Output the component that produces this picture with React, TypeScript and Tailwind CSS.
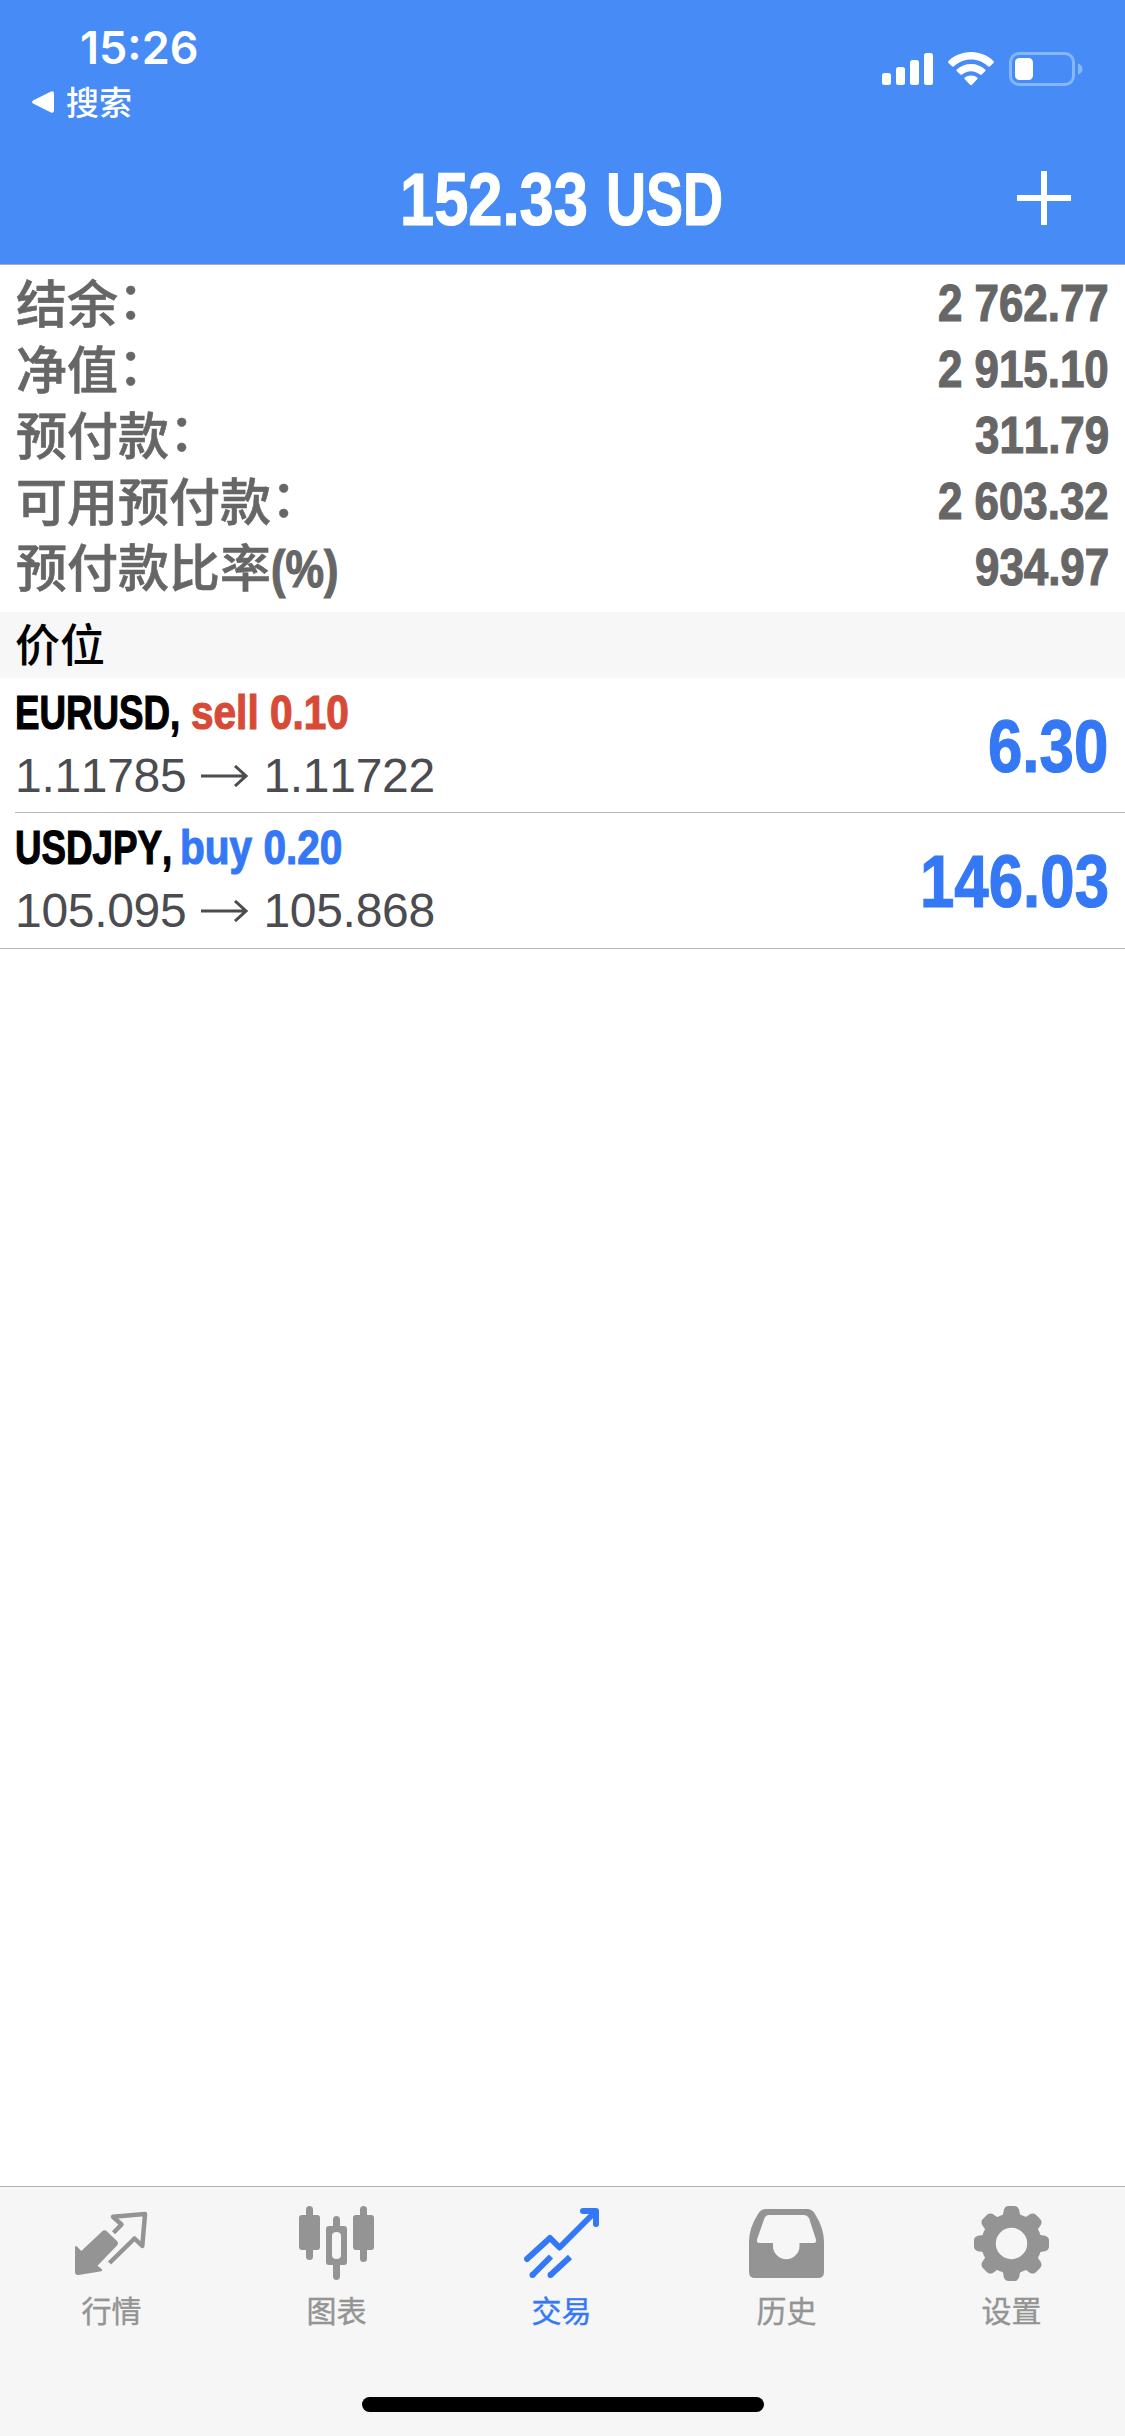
import type { ReactNode } from 'react';

const CJK = "font-['Liberation_Sans','Noto_Sans_CJK_SC',sans-serif]";

/* A bold run squeezed horizontally, in a box of the squeezed width. */
function Condensed({ box, squeeze, children }: { box: string; squeeze: string; children: ReactNode }) {
  return (
    <span className={`inline-flex shrink-0 ${box}`}>
      <span className={`inline-block origin-left whitespace-pre font-bold [-webkit-text-stroke:1.2px_currentColor] ${squeeze}`}>
        {children}
      </span>
    </span>
  );
}

function StatusBar() {
  return (
    <div className="flex h-[132px] justify-between">
      <div className="flex flex-col">
        <div className="mt-[20px] h-[56px] pl-[80px] font-['Inter',sans-serif] text-[45px] leading-[56px] font-semibold">15:26</div>
        <div className="flex h-[52px] items-center pl-[32px]">
          <svg width="22" height="22" viewBox="0 0 22 22" fill="currentColor">
            <path d="M1 9.6 19 .6Q22 -.4 22 2.500V19.500Q22 22.400 19 21.400L1 12.400Q-.8 11 1 9.600Z" />
          </svg>
          <span className="pt-[3px] pl-[12px] text-[33px] leading-[50px] font-medium">搜索</span>
        </div>
      </div>
      <div className="mt-[52px] mr-[42px] flex h-[34px] gap-[14px]">
        <svg width="52" height="34" viewBox="0 0 52 34" fill="currentColor">
          <rect x="0" y="21" width="9" height="12" rx="2.500" />
          <rect x="14" y="15" width="9" height="18" rx="2.500" />
          <rect x="28" y="8" width="9" height="25" rx="2.500" />
          <rect x="42" y="1" width="9" height="32" rx="2.500" />
        </svg>
        <svg width="46" height="34" viewBox="0 0 46 34" fill="currentColor">
          <path d="M23 0C14 0 6 3.500.5 9Q-.3 10 .5 11L4 14.300Q5 15 6 14.300C10.500 10 16.500 7.500 23 7.500S35.500 10 40 14.300Q41 15 42 14.300L45.500 11Q46.300 10 45.500 9C40 3.500 32 0 23 0Z" />
          <path d="M23 12C17.500 12 12.500 14 8.800 17.500Q8 18.300 8.800 19.200L12.300 22.500Q13.200 23.200 14.200 22.500C16.500 20.500 19.500 19.200 23 19.200S29.500 20.500 31.800 22.500Q32.800 23.200 33.700 22.500L37.200 19.200Q38 18.300 37.200 17.500C33.500 14 28.500 12 23 12Z" />
          <path d="M23 23.500C20.500 23.500 18.300 24.300 16.600 25.700Q16 26.400 16.600 27.100L22 32.700Q23 33.600 24 32.700L29.400 27.100Q30 26.400 29.400 25.700C27.700 24.300 25.500 23.500 23 23.500Z" />
        </svg>
        <svg width="75" height="34" viewBox="0 0 75 34">
          <rect x="2.500" y="1.500" width="63" height="31" rx="8.500" fill="none" stroke="#86b6fb" strokeWidth="3" />
          <path d="M70 11.500Q74.500 13 74.500 17T70 22.500Z" fill="#86b6fb" />
          <rect x="7" y="6" width="18" height="22" rx="4.500" fill="#fff" />
        </svg>
      </div>
    </div>
  );
}

function Header() {
  return (
    <header className="h-[265px] border-b border-[#a5a9c4] bg-[#478bf6] text-white">
      <StatusBar />
      <div className="grid h-[132px] grid-cols-[1fr_325px_1fr] items-center">
        <span />
        <h1 className="flex pt-[3px] text-[74px] leading-[84px] font-bold">
          <Condensed box="w-[206px]" squeeze="scale-x-[0.83]">152.33</Condensed>
          <Condensed box="w-[119px]" squeeze="scale-x-[0.75]">USD</Condensed>
        </h1>
        <svg className="mr-[54px] justify-self-end" width="54" height="54" viewBox="0 0 54 54" stroke="currentColor" strokeWidth="6">
          <path d="M27 0V54M0 27H54" />
        </svg>
      </div>
    </header>
  );
}

const Colon = () => <span className="relative -top-[4px]">：</span>;

const summary: { label: ReactNode; value: string; box: string }[] = [
  { label: <>结余<Colon /></>, value: '2 762.77', box: 'w-[172px]' },
  { label: <>净值<Colon /></>, value: '2 915.10', box: 'w-[172px]' },
  { label: <>预付款<Colon /></>, value: '311.79', box: 'w-[135px]' },
  { label: <>可用预付款<Colon /></>, value: '2 603.32', box: 'w-[172px]' },
  {
    label: <>预付款比率<Condensed box="w-[68px]" squeeze="scale-x-[0.85]">(%)</Condensed></>,
    value: '934.97',
    box: 'w-[135px]',
  },
];

function Summary() {
  return (
    <section className="flex h-[347px] flex-col pt-[6px] text-[51px] text-[#666]">
      {summary.map((row) => (
        <div key={row.value} className="flex h-[66px] items-center justify-between pr-[15px] pl-[16px] leading-[66px]">
          <span className="pt-[3px] font-medium [-webkit-text-stroke:0.6px_currentColor]">{row.label}</span>
          <Condensed box={row.box} squeeze="scale-x-[0.86]">{row.value}</Condensed>
        </div>
      ))}
    </section>
  );
}

const Arrow = () => (
  <svg className="mx-[15px]" width="47" height="22" viewBox="0 0 47 22" fill="none" stroke="currentColor" strokeWidth="3">
    <path d="M0 11H45M34 1L45 11L34 21" />
  </svg>
);

type Position = {
  symbol: string;
  symbolBox: string;
  side: string;
  sideBox: string;
  tint: string;
  open: string;
  current: string;
  profit: string;
  profitBox: string;
};

const positions: Position[] = [
  {
    symbol: 'EURUSD,', symbolBox: 'w-[176px]', side: 'sell 0.10', sideBox: 'w-[160px]', tint: 'text-[#d84a38]',
    open: '1.11785', current: '1.11722', profit: '6.30', profitBox: 'w-[122px]',
  },
  {
    symbol: 'USDJPY,', symbolBox: 'w-[165px]', side: 'buy 0.20', sideBox: 'w-[160px]', tint: 'text-[#3478f6]',
    open: '105.095', current: '105.868', profit: '146.03', profitBox: 'w-[190px]',
  },
];

function Positions() {
  return (
    <section className="border-b border-[#b9b9bc]">
      {positions.map((p, i) => (
        <div key={p.symbol} className={i === 0 ? 'ml-[15px] h-[135px] border-b border-[#b9b9bc]' : 'ml-[15px] h-[135px]'}>
          <div className="flex h-full items-center justify-between pr-[15px]">
            <div className="flex flex-col pb-[2px]">
              <div className="flex h-[63px] items-center text-[48px] leading-[60px]">
                <Condensed box={p.symbolBox} squeeze="scale-x-[0.765]">{p.symbol}</Condensed>
                <Condensed box={`${p.sideBox} ${p.tint}`} squeeze="scale-x-[0.845]">{p.side}</Condensed>
              </div>
              <div className="flex h-[63px] items-center text-[48px] leading-[60px] tracking-[-0.3px] text-[#4b4b50]">
                <span>{p.open}</span>
                <Arrow />
                <span>{p.current}</span>
              </div>
            </div>
            <div className="pt-[3px] text-[74px] leading-[90px] text-[#3478f6]">
              <Condensed box={p.profitBox} squeeze="scale-x-[0.835]">{p.profit}</Condensed>
            </div>
          </div>
        </div>
      ))}
    </section>
  );
}

const QuotesIcon = () => (
  <svg width="75" height="75" viewBox="0 0 75 75">
    <path d="M28 25.500Q30.500 23 33 25.500L43 35Q45 37.300 43 39.500L23.500 59.700L27.700 63Q29 65 26 65.500L4.500 69Q1 69.300 1 66V41.500Q1 39 3.500 41L7.300 45Z" fill="currentColor" />
    <path d="M39.500 26.700L47.500 18.500L39 10.800L71 8L68.300 40L60.500 32.500L35.500 57" fill="none" stroke="currentColor" strokeWidth="4.500" strokeLinejoin="round" />
  </svg>
);

const ChartIcon = () => (
  <svg width="75" height="75" viewBox="0 0 75 75" fill="currentColor">
    <rect x="7" y="0" width="7" height="54" rx="3.500" />
    <rect x="0" y="9" width="21" height="35" rx="3" />
    <rect x="61" y="0" width="7" height="56" rx="3.500" />
    <rect x="54" y="9" width="21" height="35" rx="3" />
    <path d="M34 20V14Q34 10 37.500 10T41 14V20H45Q48 20 48 23V56Q48 59 45 59H41V70Q41 74 37.500 74T34 70V59H30Q27 59 27 56V23Q27 20 30 20ZM37.500 26Q33 26 33 30V49Q33 53 37.500 53T42 49V30Q42 26 37.500 26Z" fillRule="evenodd" />
  </svg>
);

const TradeIcon = () => (
  <svg width="75" height="75" viewBox="0 0 75 75" fill="none" stroke="currentColor" strokeWidth="6">
    <path d="M3 53L26 32L35.500 41.500L71 6" strokeLinejoin="round" strokeLinecap="round" />
    <path d="M59 5H72V18" strokeLinecap="round" strokeLinejoin="round" />
    <path d="M8.500 69L27 50.500M26.500 69L46 51" />
    <path d="M8.500 69h.01M26.500 69h.01" strokeLinecap="round" />
  </svg>
);

const HistoryIcon = () => (
  <svg width="75" height="75" viewBox="0 0 75 75" fill="currentColor">
    <path d="M17 3H58Q63 3 66 8Q75 22 75 36V66Q75 72 69 72H6Q0 72 0 66V36Q0 22 9 8Q12 3 17 3ZM20 9Q17 9 15.500 12L8.200 33Q7 37 11 37H24V40A13.200 13.200 0 0 0 50.500 40V37H64Q68 37 66.800 33L60 12Q58 9 55 9Z" fillRule="evenodd" />
  </svg>
);

const TOOTH = 'M26 14Q29 11 29.800 4Q31 0 34.500 0H40.500Q44 0 45.200 4Q46 11 49 14Z';

const SettingsIcon = () => (
  <svg width="75" height="75" viewBox="0 0 75 75" fill="currentColor">
    <circle cx="37.500" cy="37.500" r="22.900" fill="none" stroke="currentColor" strokeWidth="14.400" />
    {[0, 45, 90, 135, 180, 225, 270, 315].map((a) => (
      <path key={a} d={TOOTH} transform={`rotate(${a} 37.5 37.5)`} />
    ))}
  </svg>
);

const tabs = [
  { label: '行情', icon: <QuotesIcon /> },
  { label: '图表', icon: <ChartIcon /> },
  { label: '交易', icon: <TradeIcon />, active: true },
  { label: '历史', icon: <HistoryIcon /> },
  { label: '设置', icon: <SettingsIcon /> },
];

function TabBar() {
  return (
    <footer className="flex h-[250px] flex-col items-center border-t border-[#b0b0b2] bg-[#f6f6f6]">
      <nav className="grid h-[146px] w-full grid-cols-5 pt-[19px]">
        {tabs.map((t) => (
          <div key={t.label} className={`flex flex-col items-center pr-[2px] ${t.active ? 'text-[#3478f6]' : 'text-[#949494]'}`}>
            {t.icon}
            <span className="mt-[9px] text-[30px] leading-[44px] [-webkit-text-stroke:0.4px_currentColor]">{t.label}</span>
          </div>
        ))}
      </nav>
      <div className="mt-[64px] h-[15px] w-[402px] rounded-full bg-black" />
    </footer>
  );
}

export default function App() {
  return (
    <div className={`flex h-[2436px] w-[1125px] flex-col overflow-hidden bg-white text-black [font-kerning:none] ${CJK}`}>
      <Header />
      <Summary />
      <div className="flex h-[66px] items-center bg-[#f7f7f7] pt-[3px] pl-[15px] text-[45px] leading-[63px] font-medium">价位</div>
      <Positions />
      <main className="flex-1" />
      <TabBar />
    </div>
  );
}
